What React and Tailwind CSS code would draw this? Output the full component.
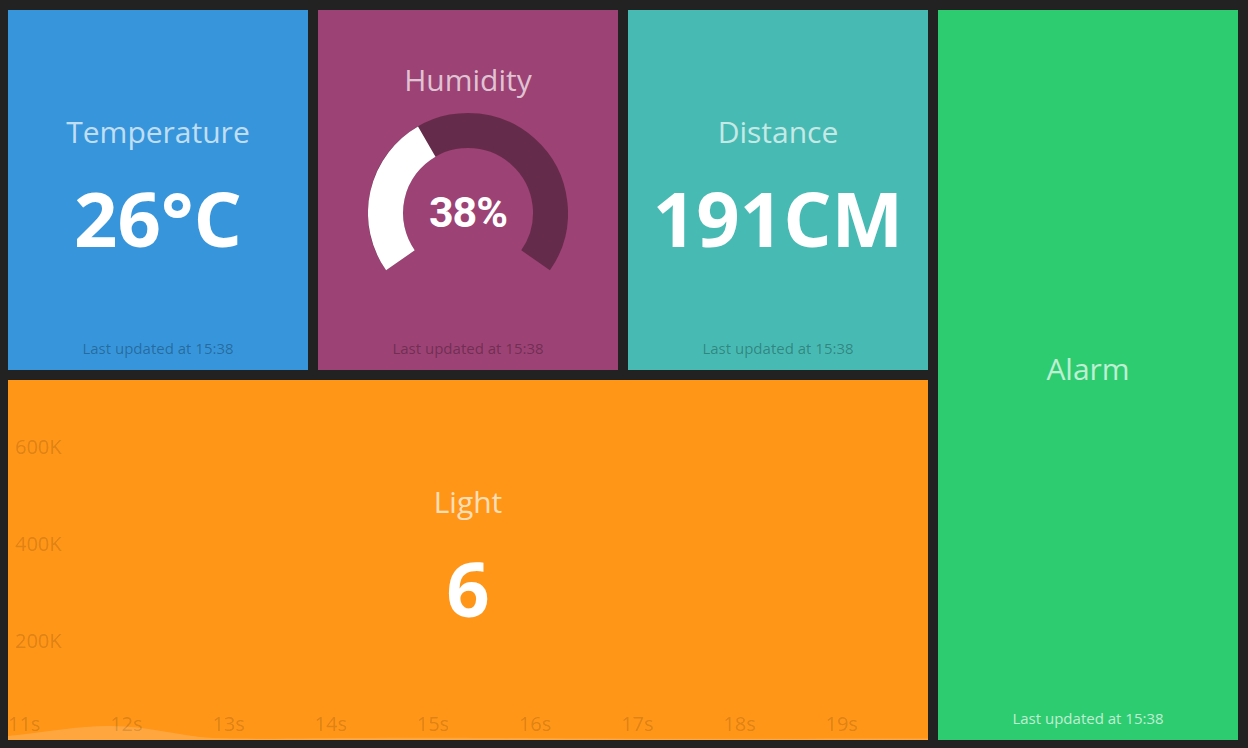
import React from 'react';

// Dashboard tiles, laid out like a 4x2 gridster board
const X_TICKS = ['11s', '12s', '13s', '14s', '15s', '16s', '17s', '18s', '19s'];
const Y_TICKS = ['600K', '400K', '200K'];

const FONT = { fontFamily: '"Open Sans", "DejaVu Sans", sans-serif' };

function Title({ children, className = '' }) {
  return (
    <h1 className={`text-[30px] leading-[36px] font-normal text-white/70 ${className}`}>
      {children}
    </h1>
  );
}

function UpdatedAt({ light }) {
  return (
    <p
      className={`mt-auto pb-[13px] text-[15px] leading-[18px] ${
        light ? 'text-white/70' : 'text-black/30'
      }`}
    >
      Last updated at 15:38
    </p>
  );
}

function NumberTile({ title, value, color }) {
  return (
    <div className={`flex flex-col items-center pt-[104px] ${color}`}>
      <Title>{title}</Title>
      <h2 className="mt-[30px] text-[76px] leading-[76px] font-bold text-white">{value}</h2>
      <UpdatedAt />
    </div>
  );
}

function Gauge() {
  return (
    <div className="relative mt-[15px] h-[200px] w-[200px]">
      <svg width="200" height="200" viewBox="0 0 200 200">
        <path
          d="M32.42 147.32 A82.5 82.5 0 1 1 167.58 147.32"
          fill="none"
          stroke="rgba(0,0,0,0.35)"
          strokeWidth="35"
        />
        <path
          d="M32.42 147.32 A82.5 82.5 0 0 1 58.75 28.55"
          fill="none"
          stroke="#ffffff"
          strokeWidth="35"
        />
      </svg>
      <div
        className="absolute inset-0 flex items-center justify-center text-[43px] font-bold tracking-[-1px] text-white"
        style={{ fontFamily: 'Roboto, "Liberation Sans", sans-serif' }}
      >
        <span className="-mt-[2px]">38%</span>
      </div>
    </div>
  );
}

function LightTile() {
  return (
    <div className="relative col-span-3 flex flex-col items-center overflow-hidden bg-[#ff9618] pt-[104px]">
      {/* graph behind the number */}
      <div className="absolute inset-0">
        <div className="absolute left-[7px] top-[54px] flex flex-col gap-[71px] text-[20px] leading-[26px] text-black/15">
          {Y_TICKS.map((t) => (
            <span key={t}>{t}</span>
          ))}
        </div>
        <svg className="absolute bottom-0 left-0" width="920" height="40" viewBox="0 0 920 40">
          <path
            d="M0 36 C40 32 70 26 102 26 C140 26 170 36 204 38 C260 39.5 300 38 360 38 C420 37.5 480 38 560 38.5 C700 39 820 38.5 920 38.5 L920 40 L0 40 Z"
            fill="rgba(255,255,255,0.17)"
          />
        </svg>
        <div className="absolute bottom-[3px] left-0 flex text-[20px] leading-[26px] text-black/15">
          {X_TICKS.map((t) => (
            <span key={t} className="w-[102.2px]">
              {t}
            </span>
          ))}
        </div>
      </div>
      <Title className="relative">Light</Title>
      <h2 className="relative mt-[30px] text-[76px] leading-[76px] font-bold text-white">6</h2>
    </div>
  );
}

export default function App() {
  return (
    <div className="h-[748px] w-full overflow-hidden bg-[#222222] pl-[8px] pt-[10px]" style={FONT}>
      <div className="grid grid-cols-[repeat(4,300px)] grid-rows-[360px_360px] gap-[10px]">
        <NumberTile title="Temperature" value="26°C" color="bg-[#3796db]" />

        <div className="flex flex-col items-center bg-[#9c4274] pt-[52px]">
          <Title>Humidity</Title>
          <Gauge />
          <UpdatedAt />
        </div>

        <NumberTile title="Distance" value="191CM" color="bg-[#47bbb3]" />

        <div className="row-span-2 flex flex-col items-center bg-[#2ecc71] pt-[341px]">
          <Title>Alarm</Title>
          <UpdatedAt light />
        </div>

        <LightTile />
      </div>
    </div>
  );
}
